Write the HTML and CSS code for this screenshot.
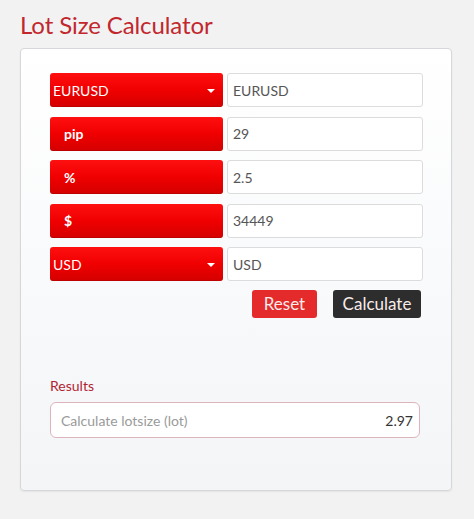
FILE: index.html
```html
<!DOCTYPE html>
<html>
<head>
<meta charset="utf-8">
<link rel="stylesheet" href="styles.css">
</head>
<body>
<div class="page">
  <h1 class="title">Lot Size Calculator</h1>
  <div class="card">
    <div class="rows">
      <div class="row">
        <div class="sel sel-drop"><span>EURUSD</span><span class="caret"></span></div>
        <div class="inp">EURUSD</div>
      </div>
      <div class="row">
        <div class="sel sel-label"><span>pip</span></div>
        <div class="inp">29</div>
      </div>
      <div class="row">
        <div class="sel sel-label"><span>%</span></div>
        <div class="inp">2.5</div>
      </div>
      <div class="row">
        <div class="sel sel-label"><span>$</span></div>
        <div class="inp">34449</div>
      </div>
      <div class="row">
        <div class="sel sel-drop"><span>USD</span><span class="caret"></span></div>
        <div class="inp">USD</div>
      </div>
    </div>
    <div class="actions">
      <button class="btn btn-reset">Reset</button>
      <button class="btn btn-calc">Calculate</button>
    </div>
    <div class="results">
      <div class="results-label">Results</div>
      <div class="result-box">
        <span class="result-name">Calculate lotsize (lot)</span>
        <span class="result-value">2.97</span>
      </div>
    </div>
  </div>
</div>
</body>
</html>
```

FILE: styles.css
```css
html, body {
  margin: 0;
  padding: 0;
}
body {
  background: #f2f2f2;
  font-family: Lato, "Open Sans", sans-serif;
  width: 474px;
  height: 519px;
  overflow: hidden;
}
.page {
  padding: 0 0 0 20px;
}
.title {
  margin: 0;
  padding-top: 10px;
  height: 38px;
  font-size: 24px;
  font-weight: 400;
  line-height: 30px;
  color: #c1272d;
  letter-spacing: -0.1px;
}
.card {
  box-sizing: border-box;
  width: 432px;
  height: 443px;
  border: 1px solid #d6d7da;
  border-radius: 4px;
  background: linear-gradient(to bottom, #ffffff 0%, #fafbfc 40%, #f4f5f7 100%);
  box-shadow: 0 1px 2px rgba(0,0,0,0.06);
  padding: 24px 28px 0 29px;
}
.rows {
  display: flex;
  flex-direction: column;
  gap: 10.5px;
}
.row {
  display: grid;
  grid-template-columns: 173px 1fr;
  gap: 4px;
  height: 33px;
}
.sel {
  box-sizing: border-box;
  display: flex;
  align-items: center;
  justify-content: space-between;
  background: linear-gradient(to bottom, #ff1010 0%, #f00000 50%, #d40000 100%);
  border-radius: 3px;
  color: #ffffff;
  font-size: 14px;
  box-shadow: inset 0 -1px 0 rgba(120,0,0,0.25);
}
.sel-drop {
  padding: 0 8px 0 3px;
}
.sel-label {
  padding: 0 0 0 14px;
  font-weight: 700;
}
.caret {
  width: 0;
  height: 0;
  border-left: 4px solid transparent;
  border-right: 4px solid transparent;
  border-top: 4px solid #ffffff;
  margin-top: 1px;
}
.inp {
  box-sizing: border-box;
  display: flex;
  align-items: center;
  background: #ffffff;
  border: 1px solid #dcdcdc;
  border-radius: 3px;
  padding: 0 0 0 5px;
  font-size: 14px;
  color: #555555;
  height: 34px;
}
.actions {
  display: flex;
  justify-content: flex-end;
  gap: 16px;
  margin-top: 10px;
  padding-right: 2px;
}
.btn {
  font-family: Lato, "Open Sans", sans-serif;
  font-size: 17px;
  border: none;
  border-radius: 3px;
  height: 28px;
  padding: 0;
  color: #f7ecea;
  cursor: pointer;
  line-height: 28px;
}
.btn-reset {
  width: 65px;
  background: #e42a2a;
}
.btn-calc {
  width: 88px;
  background: #2d2d2d;
}
.results {
  margin-top: 59px;
  padding-right: 3px;
}
.results-label {
  font-size: 14px;
  color: #b31f33;
  height: 18px;
  line-height: 18px;
}
.result-box {
  box-sizing: border-box;
  margin-top: 7px;
  height: 36px;
  display: flex;
  align-items: center;
  justify-content: space-between;
  background: #ffffff;
  border: 1px solid #dcb4bb;
  border-radius: 6px;
  padding: 0 6px 0 10px;
  font-size: 14px;
}
.result-name {
  color: #9a9a9a;
}
.result-value {
  color: #333333;
}
```
